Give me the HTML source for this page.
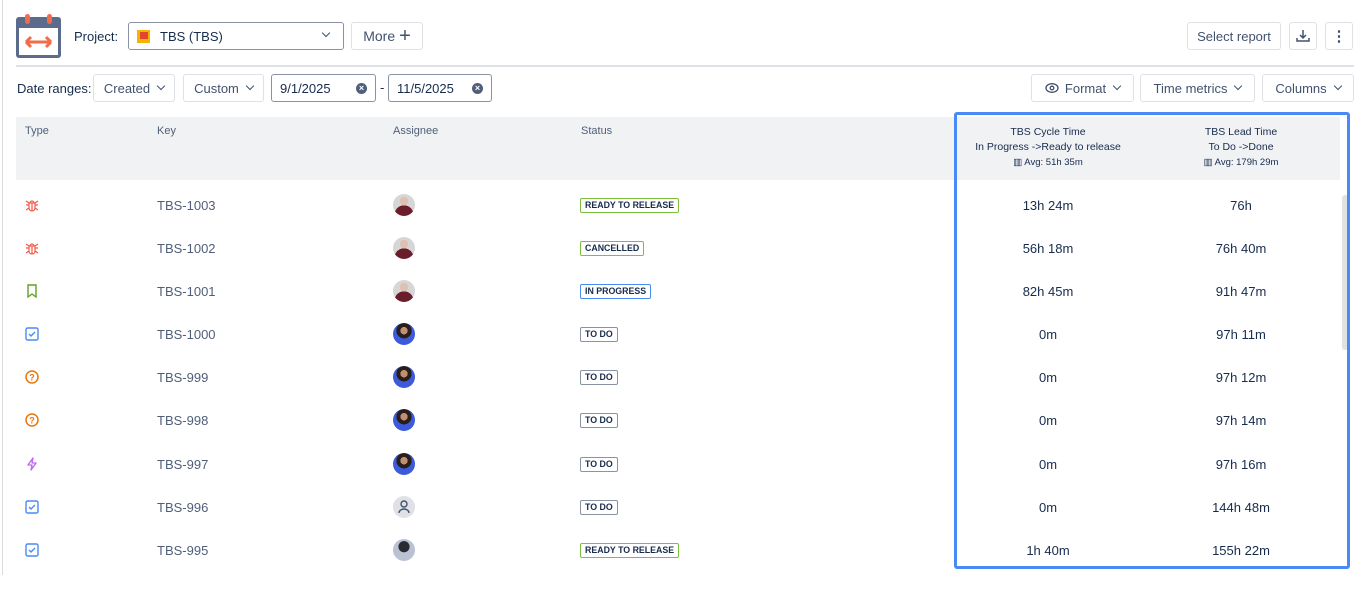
<!DOCTYPE html>
<html><head><meta charset="utf-8"><style>
*{box-sizing:border-box;margin:0;padding:0}
body{width:1366px;height:575px;overflow:hidden;background:#fff;font-family:"Liberation Sans",sans-serif;color:#172b4d;position:relative;font-size:13px}
.abs{position:absolute}
.btn{position:absolute;border:1px solid #dfe1e6;border-radius:3px;background:#fff;height:28px;display:flex;align-items:center;justify-content:center;font-size:13px;color:#42526e}
.inp{position:absolute;border:1px solid #8993a4;border-radius:3px;background:#fff;height:28px;display:flex;align-items:center;font-size:13px;color:#172b4d;padding-left:8px}
.chev{display:inline-block;width:6px;height:6px;border-right:1.3px solid #42526e;border-bottom:1.3px solid #42526e;transform:rotate(45deg);margin-left:8px;margin-top:-4px}
.x{position:absolute;right:8px;top:8px;width:11px;height:11px;border-radius:50%;background:#505f79;color:#fff;font-size:9px;line-height:11px;text-align:center;font-weight:bold}
.hd{position:absolute;top:125px;font-size:11px;color:#505f79}
.row{position:absolute;left:0;width:1340px;height:43px}
.key{position:absolute;left:157px;top:-7px;font-size:13px;color:#505f79}
.av{position:absolute;left:393px;top:-11px;width:22px;height:22px;border-radius:50%}
.st{position:absolute;left:580px;top:-7px;height:15px;border:1px solid;border-radius:2px;font-size:8.8px;font-weight:bold;padding:0 4px;line-height:13px;color:#172b4d}
.c1,.c2{position:absolute;top:-7px;font-size:13px;color:#172b4d;width:200px;text-align:center}
.c1{left:948px}.c2{left:1141px}
.ic{position:absolute;left:25px;top:-7px;width:14px;height:14px}
.p1{background:radial-gradient(circle at 50% 32%,#e0c0b0 0 22%,transparent 23%),radial-gradient(circle at 50% 95%,#6a1d2a 0 40%,#d6d6d6 41%)}
.p2{background:radial-gradient(circle at 50% 35%,#c09070 0 20%,#2a1e1a 21% 42%,#3b5bdb 43%)}
</style></head><body>
<div class="abs" style="left:2px;top:0;width:1px;height:575px;background:#dcdcdc"></div>
<svg class="abs" style="left:16px;top:14px" width="45" height="45" viewBox="0 0 45 45">
<rect x="0" y="3" width="45" height="41" rx="3" fill="#5a6b8c"/>
<rect x="3" y="14" width="39" height="27" fill="#fff"/>
<rect x="9" y="0" width="5" height="10" rx="2.5" fill="#f36b4a"/>
<rect x="31" y="0" width="5" height="10" rx="2.5" fill="#f36b4a"/>
<path d="M10 28h25M10 28l5-5M10 28l5 5M35 28l-5-5M35 28l-5 5" stroke="#f36b4a" stroke-width="3" fill="none"/>
</svg>
<div class="abs" style="left:74px;top:29px;font-size:13px">Project:</div>
<div class="inp" style="left:128px;top:22px;width:216px;height:28px">
<span style="display:inline-block;width:13px;height:13px;background:#f5b400;margin-right:10px;position:relative"><span style="position:absolute;left:3px;top:2px;width:8px;height:7px;background:#e5452f"></span></span>TBS (TBS)<span class="chev" style="position:absolute;right:14px;top:11px"></span></div>
<div class="btn" style="left:351px;top:22px;width:72px;font-size:14px">More <span style="font-size:20px;margin-left:4px;font-weight:300">+</span></div>
<div class="btn" style="left:1187px;top:22px;width:94px;color:#42526e">Select report</div>
<div class="btn" style="left:1289px;top:22px;width:28px"><svg width="14" height="14" viewBox="0 0 14 14"><path d="M7 1v8M4 6l3 3 3-3M1 9v3h12V9" stroke="#42526e" stroke-width="1.5" fill="none"/></svg></div>
<div class="btn" style="left:1325px;top:22px;width:28px;font-weight:bold;font-size:15px">⋮</div>
<div class="abs" style="left:16px;top:65px;width:1338px;height:2px;background:#dfe1e6"></div>
<div class="abs" style="left:17px;top:81px;font-size:13px">Date ranges:</div>
<div class="btn" style="left:93px;top:74px;width:82px;color:#42526e">Created<span class="chev"></span></div>
<div class="btn" style="left:183px;top:74px;width:81px;color:#42526e">Custom<span class="chev"></span></div>
<div class="inp" style="left:271px;top:74px;width:105px">9/1/2025<span class="x">×</span></div>
<div class="abs" style="left:380px;top:80px">-</div>
<div class="inp" style="left:388px;top:74px;width:104px">11/5/2025<span class="x">×</span></div>
<div class="btn" style="left:1031px;top:74px;width:103px"><svg width="14" height="14" viewBox="0 0 14 14" style="margin-right:6px"><ellipse cx="7" cy="7" rx="6" ry="4.3" stroke="#42526e" stroke-width="1.3" fill="none"/><circle cx="7" cy="7" r="1.8" stroke="#42526e" stroke-width="1.3" fill="none"/></svg>Format<span class="chev"></span></div>
<div class="btn" style="left:1140px;top:74px;width:115px">Time metrics<span class="chev"></span></div>
<div class="btn" style="left:1262px;top:74px;width:92px">Columns<span class="chev"></span></div>
<div class="abs" style="left:16px;top:117px;width:1324px;height:63px;background:#f1f2f4"></div>
<div class="hd" style="left:25px">Type</div>
<div class="hd" style="left:157px">Key</div>
<div class="hd" style="left:393px">Assignee</div>
<div class="hd" style="left:581px">Status</div>
<div class="abs" style="left:948px;top:125px;width:200px;text-align:center;font-size:10.5px;color:#172b4d;line-height:15px">TBS Cycle Time<br>In Progress -&gt;Ready to release<br><span style="font-size:9.5px">▥ Avg: 51h 35m</span></div>
<div class="abs" style="left:1141px;top:125px;width:200px;text-align:center;font-size:10.5px;color:#172b4d;line-height:15px">TBS Lead Time<br>To Do -&gt;Done<br><span style="font-size:9.5px">▥ Avg: 179h 29m</span></div>
<div class="abs" style="left:1342px;top:195px;width:7px;height:155px;background:#e2e2e2;border-radius:3px"></div>
<div class="abs" style="left:954px;top:112px;width:396px;height:457px;border:3px solid #4a8af4;border-radius:3px"></div>

<div class="row" style="top:205px"><svg class="ic" viewBox="0 0 14 14"><path d="M4 5h6v5a3 3 0 01-6 0zM5 5a2 2 0 014 0M1 7h3M10 7h3M1 3l3 2M13 3l-3 2M1 12l3-2M13 12l-3-2M7 5v8" stroke="#f15b4a" stroke-width="1.2" fill="none"/></svg><div class="key">TBS-1003</div><div class="av p1"></div><div class="st" style="border-color:#7cbf3e">READY TO RELEASE</div><div class="c1">13h 24m</div><div class="c2">76h</div></div>
<div class="row" style="top:248px"><svg class="ic" viewBox="0 0 14 14"><path d="M4 5h6v5a3 3 0 01-6 0zM5 5a2 2 0 014 0M1 7h3M10 7h3M1 3l3 2M13 3l-3 2M1 12l3-2M13 12l-3-2M7 5v8" stroke="#f15b4a" stroke-width="1.2" fill="none"/></svg><div class="key">TBS-1002</div><div class="av p1"></div><div class="st" style="border-color:#7cbf3e">CANCELLED</div><div class="c1">56h 18m</div><div class="c2">76h 40m</div></div>
<div class="row" style="top:291px"><svg class="ic" viewBox="0 0 14 14"><path d="M3 1h8v12l-4-3-4 3z" stroke="#63a121" stroke-width="1.4" fill="none"/></svg><div class="key">TBS-1001</div><div class="av p1"></div><div class="st" style="border-color:#4a8af4">IN PROGRESS</div><div class="c1">82h 45m</div><div class="c2">91h 47m</div></div>
<div class="row" style="top:334px"><svg class="ic" viewBox="0 0 14 14"><rect x="1" y="1" width="12" height="12" rx="1.5" stroke="#4a8af4" stroke-width="1.4" fill="none"/><path d="M4 7l2 2 4-4" stroke="#4a8af4" stroke-width="1.4" fill="none"/></svg><div class="key">TBS-1000</div><div class="av p2"></div><div class="st" style="border-color:#8993a4">TO DO</div><div class="c1">0m</div><div class="c2">97h 11m</div></div>
<div class="row" style="top:377px"><svg class="ic" viewBox="0 0 14 14"><circle cx="7" cy="7" r="6" stroke="#e8760b" stroke-width="1.5" fill="none"/><text x="7" y="10.5" font-size="9" font-weight="bold" text-anchor="middle" fill="#e8760b" font-family="Liberation Sans">?</text></svg><div class="key">TBS-999</div><div class="av p2"></div><div class="st" style="border-color:#8993a4">TO DO</div><div class="c1">0m</div><div class="c2">97h 12m</div></div>
<div class="row" style="top:420px"><svg class="ic" viewBox="0 0 14 14"><circle cx="7" cy="7" r="6" stroke="#e8760b" stroke-width="1.5" fill="none"/><text x="7" y="10.5" font-size="9" font-weight="bold" text-anchor="middle" fill="#e8760b" font-family="Liberation Sans">?</text></svg><div class="key">TBS-998</div><div class="av p2"></div><div class="st" style="border-color:#8993a4">TO DO</div><div class="c1">0m</div><div class="c2">97h 14m</div></div>
<div class="row" style="top:464px"><svg class="ic" viewBox="0 0 14 14"><path d="M8 1L3 8h4l-1 5 5-7H7z" stroke="#bf63f3" stroke-width="1.3" fill="none" stroke-linejoin="round"/></svg><div class="key">TBS-997</div><div class="av p2"></div><div class="st" style="border-color:#8993a4">TO DO</div><div class="c1">0m</div><div class="c2">97h 16m</div></div>
<div class="row" style="top:507px"><svg class="ic" viewBox="0 0 14 14"><rect x="1" y="1" width="12" height="12" rx="1.5" stroke="#4a8af4" stroke-width="1.4" fill="none"/><path d="M4 7l2 2 4-4" stroke="#4a8af4" stroke-width="1.4" fill="none"/></svg><div class="key">TBS-996</div><div class="av" style="background:#dfe1e6"><svg width="22" height="22" viewBox="0 0 22 22"><circle cx="11" cy="8" r="3" stroke="#42526e" stroke-width="1.4" fill="none"/><path d="M6 17a5 4 0 0110 0" stroke="#42526e" stroke-width="1.4" fill="none"/></svg></div><div class="st" style="border-color:#8993a4">TO DO</div><div class="c1">0m</div><div class="c2">144h 48m</div></div>
<div class="row" style="top:550px"><svg class="ic" viewBox="0 0 14 14"><rect x="1" y="1" width="12" height="12" rx="1.5" stroke="#4a8af4" stroke-width="1.4" fill="none"/><path d="M4 7l2 2 4-4" stroke="#4a8af4" stroke-width="1.4" fill="none"/></svg><div class="key">TBS-995</div><div class="av" style="background:radial-gradient(circle at 50% 35%,#2a2a33 0 30%,#b9c2d3 32%)"></div><div class="st" style="border-color:#7cbf3e">READY TO RELEASE</div><div class="c1">1h 40m</div><div class="c2">155h 22m</div></div>
</body></html>
